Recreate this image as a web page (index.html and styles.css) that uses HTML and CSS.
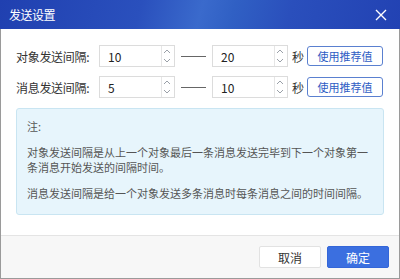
FILE: index.html
```html
<!DOCTYPE html>
<html>
<head>
<meta charset="utf-8">
<link rel="stylesheet" href="styles.css">
</head>
<body>
<div class="win">
  <div class="titlebar">
    <span class="title">发送设置</span>
    <svg class="close" width="12" height="12" viewBox="0 0 12 12"><path d="M1 1L11 11M11 1L1 11" stroke="#fff" stroke-width="1.4" fill="none"/></svg>
  </div>
  <div class="content">
    <div class="row">
      <span class="label">对象发送间隔:</span>
      <div class="spin"><span class="val">10</span><span class="arrows"><svg width="10" height="20" viewBox="0 0 10 20"><path d="M2 7L5 4L8 7M2 13L5 16L8 13" stroke="#9aa0a8" stroke-width="1" fill="none"/></svg></span></div>
      <span class="dash"></span>
      <div class="spin"><span class="val">20</span><span class="arrows"><svg width="10" height="20" viewBox="0 0 10 20"><path d="M2 7L5 4L8 7M2 13L5 16L8 13" stroke="#9aa0a8" stroke-width="1" fill="none"/></svg></span></div>
      <span class="unit">秒</span>
      <button class="rec">使用推荐值</button>
    </div>
    <div class="row">
      <span class="label">消息发送间隔:</span>
      <div class="spin"><span class="val">5</span><span class="arrows"><svg width="10" height="20" viewBox="0 0 10 20"><path d="M2 7L5 4L8 7M2 13L5 16L8 13" stroke="#9aa0a8" stroke-width="1" fill="none"/></svg></span></div>
      <span class="dash"></span>
      <div class="spin"><span class="val">10</span><span class="arrows"><svg width="10" height="20" viewBox="0 0 10 20"><path d="M2 7L5 4L8 7M2 13L5 16L8 13" stroke="#9aa0a8" stroke-width="1" fill="none"/></svg></span></div>
      <span class="unit">秒</span>
      <button class="rec">使用推荐值</button>
    </div>
    <div class="note">
      <p class="head">注:</p>
      <p>对象发送间隔是从上一个对象最后一条消息发送完毕到下一个对象第一条消息开始发送的间隔时间。</p>
      <p>消息发送间隔是给一个对象发送多条消息时每条消息之间的时间间隔。</p>
    </div>
  </div>
  <div class="footer">
    <button class="btn cancel">取消</button>
    <button class="btn ok">确定</button>
  </div>
</div>
</body>
</html>
```
FILE: styles.css
```css
html, body { margin: 0; padding: 0; }
body {
  width: 400px; height: 279px; overflow: hidden;
  font-family: "Noto Sans CJK SC", "Noto Sans", sans-serif;
  background: #fff;
}
.win {
  width: 400px; height: 279px; box-sizing: border-box;
  border: 1px solid #9a9a9a; border-top: none;
  display: flex; flex-direction: column;
}
.titlebar {
  height: 29px; margin: 0 -1px; flex: none;
  display: flex; align-items: center; justify-content: space-between;
  padding: 0 13px 0 9px;
  background: linear-gradient(105deg, #2040b0 0%, #2a50bd 35%, #3a6acc 50%, #3060c4 58%, #2a4fbc 72%, #2242b3 100%);
  color: #fff; font-size: 12px;
}
.title { letter-spacing: -0.5px; }
.content { flex: 1; padding: 16px 15px 0 15px; display: flex; flex-direction: column; }
.row { display: flex; align-items: center; height: 22px; margin-bottom: 9px; font-size: 12px; color: #333; }
.label { width: 83px; letter-spacing: -0.3px; }
.spin {
  width: 76px; height: 22px; box-sizing: border-box;
  border: 1px solid #dcdcdc; display: flex; align-items: center;
}
.val { flex: 1; padding-left: 8px; font-size: 12px; color: #222; }
.arrows { width: 12px; height: 20px; border-left: 1px solid #e6e6e6; display: flex; }
.dash { width: 25px; height: 1px; background: #666; margin: 0 6px; }
.unit { margin-left: 4px; width: 15px; }
.rec {
  margin-left: 0; width: 76px; height: 20px; padding: 0;
  border: 1px solid #5a80d0; border-radius: 3px; background: #fff;
  color: #2e5cc4; font-family: inherit; font-size: 11px;
}
.note {
  margin-top: 1px; height: 107px; box-sizing: border-box;
  background: #e7f5fc; border: 1px solid #c9e5f2; border-radius: 3px;
  padding: 10px 10px 0 10px; font-size: 11px; color: #555; line-height: 15px;
}
.note p { margin: 0 0 11px 0; }
.note p.head { margin-bottom: 11px; }
.note p + p { margin-top: 0; }
.note p:last-child { margin-top: 2px; }
.footer {
  height: 42px; flex: none; background: #f7f7f7; border-top: 1px solid #e4e4e4;
  display: flex; align-items: center; justify-content: flex-end; padding-right: 10px; gap: 6px;
}
.btn {
  width: 62px; height: 22px; padding: 0; font-family: inherit; font-size: 12px; border-radius: 2px;
}
.cancel { background: #fff; border: 1px solid #e2e2e2; color: #333; }
.ok { background: #3b6fe0; border: 1px solid #3466d8; color: #fff; }
```
